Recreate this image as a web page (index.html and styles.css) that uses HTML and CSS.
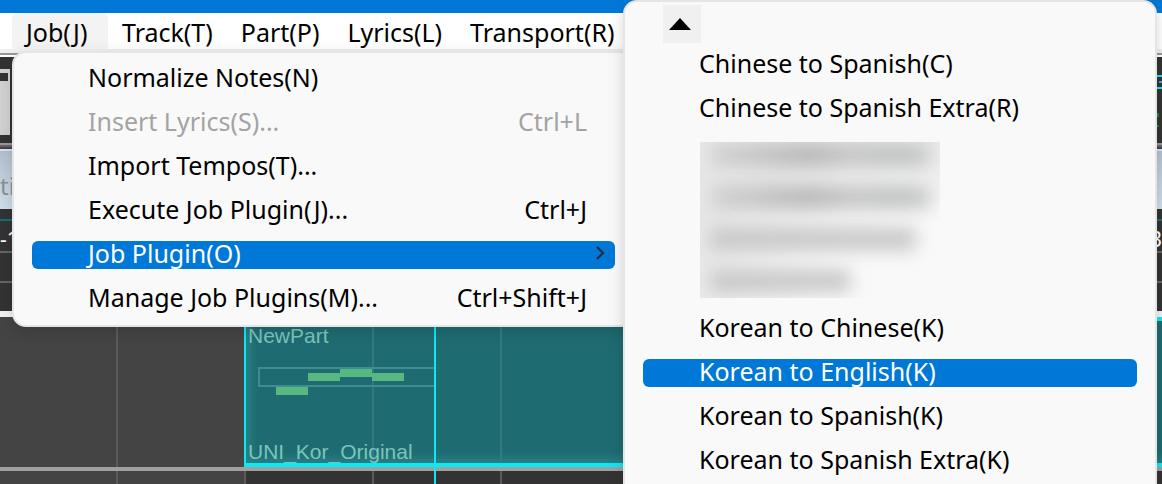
FILE: index.html
```html
<!DOCTYPE html>
<html lang="en">
<head>
<meta charset="utf-8">
<title>Job Plugin menu</title>
<link rel="stylesheet" href="styles.css">
</head>
<body>
<div class="app">
  <div class="titlebar"></div>
  <nav class="menubar">
    <button class="menubar-item is-open">Job(J)</button>
    <button class="menubar-item">Track(T)</button>
    <button class="menubar-item">Part(P)</button>
    <button class="menubar-item">Lyrics(L)</button>
    <button class="menubar-item">Transport(R)</button>
  </nav>
  <div class="toolbar">
    <div class="tool-panel"><span class="tool-slot"></span></div>
    <svg class="readout" width="5" height="60" viewBox="0 0 5 60"><path d="M0 1h5M0 13h5" stroke="#0be9f5" stroke-width="2"/><path d="M2 7h3" stroke="#35aee8" stroke-width="2"/><path d="M0 38h2v4h-2zM0 50h2v2h-2z" fill="#13873a"/></svg>
  </div>
  <div class="header-strip"><span>ti</span></div>
  <div class="ruler"><span>-1</span><span>3</span></div>
  <div class="track">
    <div class="track-empty"></div>
    <div class="part">
      <span class="part-name">NewPart</span>
      <svg class="notes" width="178" height="28" viewBox="0 0 178 28"><path d="M178 1H1v18h177" fill="none" stroke="#3f8d92" stroke-width="2"/><path d="M18 20h32v8H18zM50 6h32v8H50zM82 2h32v8H82zM114 6h32v8h-32z" fill="#57b97f"/></svg>
      <span class="part-singer">UNI_Kor_Original</span>
    </div>
  </div>
  <div class="next-track"></div>
  <div class="playhead"></div>

  <div class="menu job-menu" role="menu">
    <button class="row" role="menuitem"><span>Normalize Notes(N)</span></button>
    <button class="row" role="menuitem" disabled><span>Insert Lyrics(S)...</span><span>Ctrl+L</span></button>
    <button class="row" role="menuitem"><span>Import Tempos(T)...</span></button>
    <button class="row" role="menuitem"><span>Execute Job Plugin(J)...</span><span>Ctrl+J</span></button>
    <button class="row is-active" role="menuitem"><span>Job Plugin(O)</span><svg width="10" height="16" viewBox="0 0 10 16"><path d="M2 2l6 6-6 6" fill="none" stroke="#1d2b3a" stroke-width="2"/></svg></button>
    <button class="row" role="menuitem"><span>Manage Job Plugins(M)...</span><span>Ctrl+Shift+J</span></button>
  </div>

  <div class="menu plugin-menu" role="menu">
    <button class="scroll-up" aria-label="Scroll up"><svg width="22" height="12" viewBox="0 0 22 12"><path d="M11 0L22 12H0z"/></svg></button>
    <button class="row" role="menuitem"><span>Chinese to Spanish(C)</span></button>
    <button class="row" role="menuitem"><span>Chinese to Spanish Extra(R)</span></button>
    <div class="redacted"><i class="smear wide"></i><i class="smear wide"></i><i class="smear mid"></i><i class="smear short"></i></div>
    <button class="row" role="menuitem"><span>Korean to Chinese(K)</span></button>
    <button class="row is-active" role="menuitem"><span>Korean to English(K)</span></button>
    <button class="row" role="menuitem"><span>Korean to Spanish(K)</span></button>
    <button class="row" role="menuitem"><span>Korean to Spanish Extra(K)</span></button>
  </div>
</div>
</body>
</html>
```
FILE: styles.css
```css
* { box-sizing: border-box; }
body { margin: 0; font-family: "Noto Sans", "Open Sans", sans-serif; font-size: 25px; }
button { font: inherit; color: #000; border: 0; background: none; padding: 0; text-align: left; white-space: nowrap; }
svg { display: block; }
.app { position: relative; display: flex; flex-direction: column; height: 100vh; overflow: hidden; background: #333; }
.app > * { flex-shrink: 0; }
.titlebar { height: 13px; background: #0078d7; }
.menubar { display: flex; height: 44px; padding-left: 12px; background: linear-gradient(#fff 36px, #f0f0f0 36px 40px, #999 40px 42px, #fff 42px); }
.menubar-item { min-width: 96px; height: 38px; padding: 0 14px; line-height: 38px; }
.menubar-item.is-open { background: #f3f3f3; border-radius: 6px; }
.toolbar { display: flex; justify-content: space-between; height: 86px; background: #333; }
.tool-panel { width: 10px; height: 66px; margin-top: 12px; padding-top: 4px; background: #d2d2d2; }
.tool-slot { display: block; width: 8px; height: 8px; background: #333; }
.readout { margin-top: 18px; }
.header-strip { height: 66px; padding-top: 28px; color: #8e8e96; font-size: 24px; line-height: 30px; background: linear-gradient(#999 2px, #666 2px 4px, #444 4px 6px, #dce2ee 6px 8px, #b3c1cf 8px, #cfdfeb); }
.ruler { display: flex; justify-content: space-between; height: 108px; padding-top: 15px; color: #fff; font-size: 21px; line-height: 30px; background: linear-gradient(#333 10px, #1c6b70 10px 12px, #333 12px 42px, #666 42px 44px, #333 44px 72px, #666 72px 74px, #333 74px 102px, #f2f2f2 102px); }
.track { display: flex; height: 154px; background: #444; border-bottom: 4px solid #a0a0a0; }
.track-empty { flex: 0 0 244px; background: linear-gradient(90deg, #444 116px, #5a5a5a 116px 118px, #444 118px); }
.part { display: flex; flex: 1; flex-direction: column; padding: 2px 0 0 2px; overflow: hidden; font-family: "Liberation Sans", sans-serif; font-size: 21px; line-height: 26px; color: #7cc4bd; border: 4px solid #0be9f5; border-width: 4px 0 4px 2px; background: linear-gradient(90deg, transparent 126px, #35797e 126px 128px, transparent 128px 254px, #35797e 254px 256px, transparent 256px), #1e6c71; box-shadow: inset 8px -8px 10px -4px #2a8589; }
.notes { margin: 18px 0 0 10px; }
.part-singer { height: 24px; margin-top: auto; }
.next-track { flex: 1; background: linear-gradient(90deg, #444 116px, #5a5a5a 116px 118px, #444 118px 244px, #5a5a5a 244px 246px, #333 246px 372px, #5a5a5a 372px 374px, #333 374px 500px, #5a5a5a 500px 502px, #333 502px); }
.playhead { position: absolute; top: 317px; bottom: 0; left: 434px; width: 2px; background: #0be9f5; }
.menu { position: absolute; display: flex; flex-direction: column; background: #f9f9f9; border: 2px solid #e5e5e5; box-shadow: 0 4px 16px rgba(0, 0, 0, .15); }
.job-menu { top: 51px; left: 12px; width: 623px; padding: 4px 18px; border-radius: 14px; }
.plugin-menu { top: 0; bottom: 0; left: 623px; width: 534px; padding: 3px 18px; border-bottom: 0; border-radius: 14px 14px 0 0; }
.row { display: flex; flex-shrink: 0; align-items: center; justify-content: space-between; height: 28px; margin: 8px 0; padding: 0 28px 4px 56px; border-radius: 6px; line-height: 24px; }
.row:disabled { color: #a3a3a3; }
.row.is-active { color: #fff; background: #0078d7; }
.job-menu .is-active { padding-right: 10px; }
.scroll-up { display: flex; flex-shrink: 0; align-items: center; justify-content: center; width: 38px; height: 38px; margin-left: 20px; padding-right: 4px; background: #f0f0f0; }
.redacted { display: flex; flex-shrink: 0; flex-direction: column; gap: 20px; width: 240px; height: 156px; margin: 11px 0 9px 57px; padding: 2px 10px; overflow: hidden; background: radial-gradient(ellipse at 100% 100%, #f9f9f9 35%, #e8e8e8 75%); }
.smear { flex-shrink: 0; height: 22px; background: linear-gradient(90deg, #d0d0d0, #b4b4b4 45%, #c4c4c4 65%, #bcbfbf 85%, #c8c8c8); filter: blur(9px); }
.wide { width: 220px; }
.mid { width: 206px; background: #c6c6c6; }
.short { width: 140px; background: #c6c6c6; }
```
